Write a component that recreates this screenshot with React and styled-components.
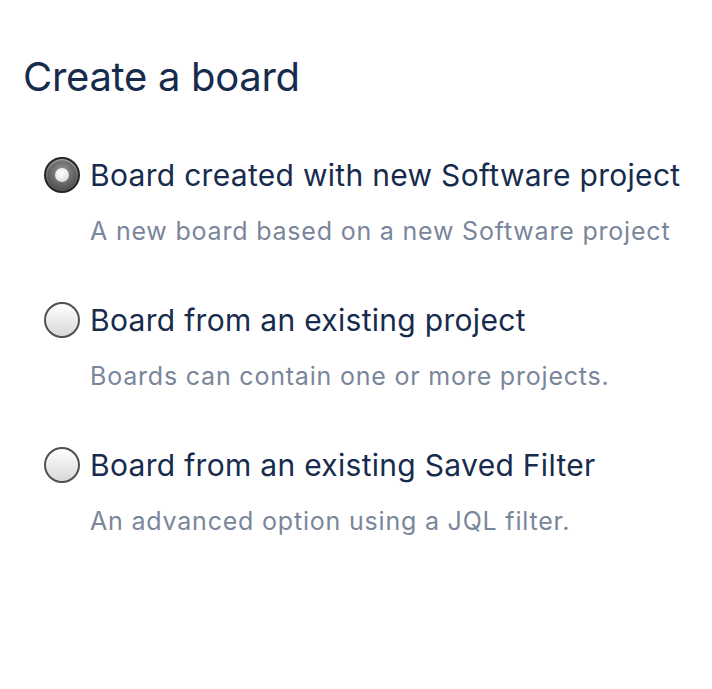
import styled, { createGlobalStyle } from "styled-components";

const options = [
  {
    label: "Board created with new Software project",
    description: "A new board based on a new Software project",
    checked: true,
  },
  {
    label: "Board from an existing project",
    description: "Boards can contain one or more projects.",
  },
  {
    label: "Board from an existing Saved Filter",
    description: "An advanced option using a JQL filter.",
  },
];

function App() {
  return (
    <>
      <GlobalStyle />
      <Page>
        <Title>Create a board</Title>
        <OptionList>
          {options.map((option) => (
            <Option key={option.label}>
              <LabelRow>
                <Radio $checked={option.checked} />
                <Label>{option.label}</Label>
              </LabelRow>
              <Description>{option.description}</Description>
            </Option>
          ))}
        </OptionList>
      </Page>
    </>
  );
}

const GlobalStyle = createGlobalStyle`
  body {
    margin: 0;
    background: #fff;
    font-family: Inter, "Noto Sans", sans-serif;
  }
`;

const Page = styled.div`
  width: 712px;
  height: 689px;
  padding: 52px 0 0 23px;
  box-sizing: border-box;
`;

const Title = styled.h1`
  margin: 0;
  font-size: 40px;
  font-weight: 400;
  line-height: 50px;
  letter-spacing: -0.3px;
  color: #172b4d;
`;

const OptionList = styled.ul`
  list-style: none;
  margin: 55px 0 0;
  padding: 0 0 0 21px;
  display: flex;
  flex-direction: column;
  gap: 56px;
`;

const Option = styled.li`
  display: flex;
  flex-direction: column;
`;

const LabelRow = styled.div`
  display: flex;
  align-items: center;
  gap: 10px;
`;

const Radio = styled.span`
  width: 36px;
  height: 36px;
  border-radius: 50%;
  box-sizing: border-box;
  flex-shrink: 0;
  position: relative;
  border: 2px solid ${(props) => (props.$checked ? "#262626" : "#505050")};
  background: ${(props) =>
    props.$checked
      ? "radial-gradient(circle at 50% 40%, #9a9a9a 0%, #6a6a6a 45%, #3a3a3a 100%)"
      : "linear-gradient(#ffffff, #d8d8d8)"};
  box-shadow: inset 0 1px 2px rgba(255, 255, 255, 0.6);

  &::after {
    content: "";
    display: ${(props) => (props.$checked ? "block" : "none")};
    position: absolute;
    left: 50%;
    top: 50%;
    width: 14px;
    height: 14px;
    margin: -7px 0 0 -7px;
    border-radius: 50%;
    background: radial-gradient(circle at 45% 35%, #ffffff 0%, #e6e6e6 60%, #bdbdbd 100%);
  }
`;

const Label = styled.span`
  font-size: 30px;
  line-height: 36px;
  letter-spacing: 0.3px;
  color: #172b4d;
`;

const Description = styled.p`
  margin: 23px 0 0 46px;
  font-size: 25px;
  line-height: 30px;
  letter-spacing: 0.8px;
  color: #7a869a;
`;

export default App;
